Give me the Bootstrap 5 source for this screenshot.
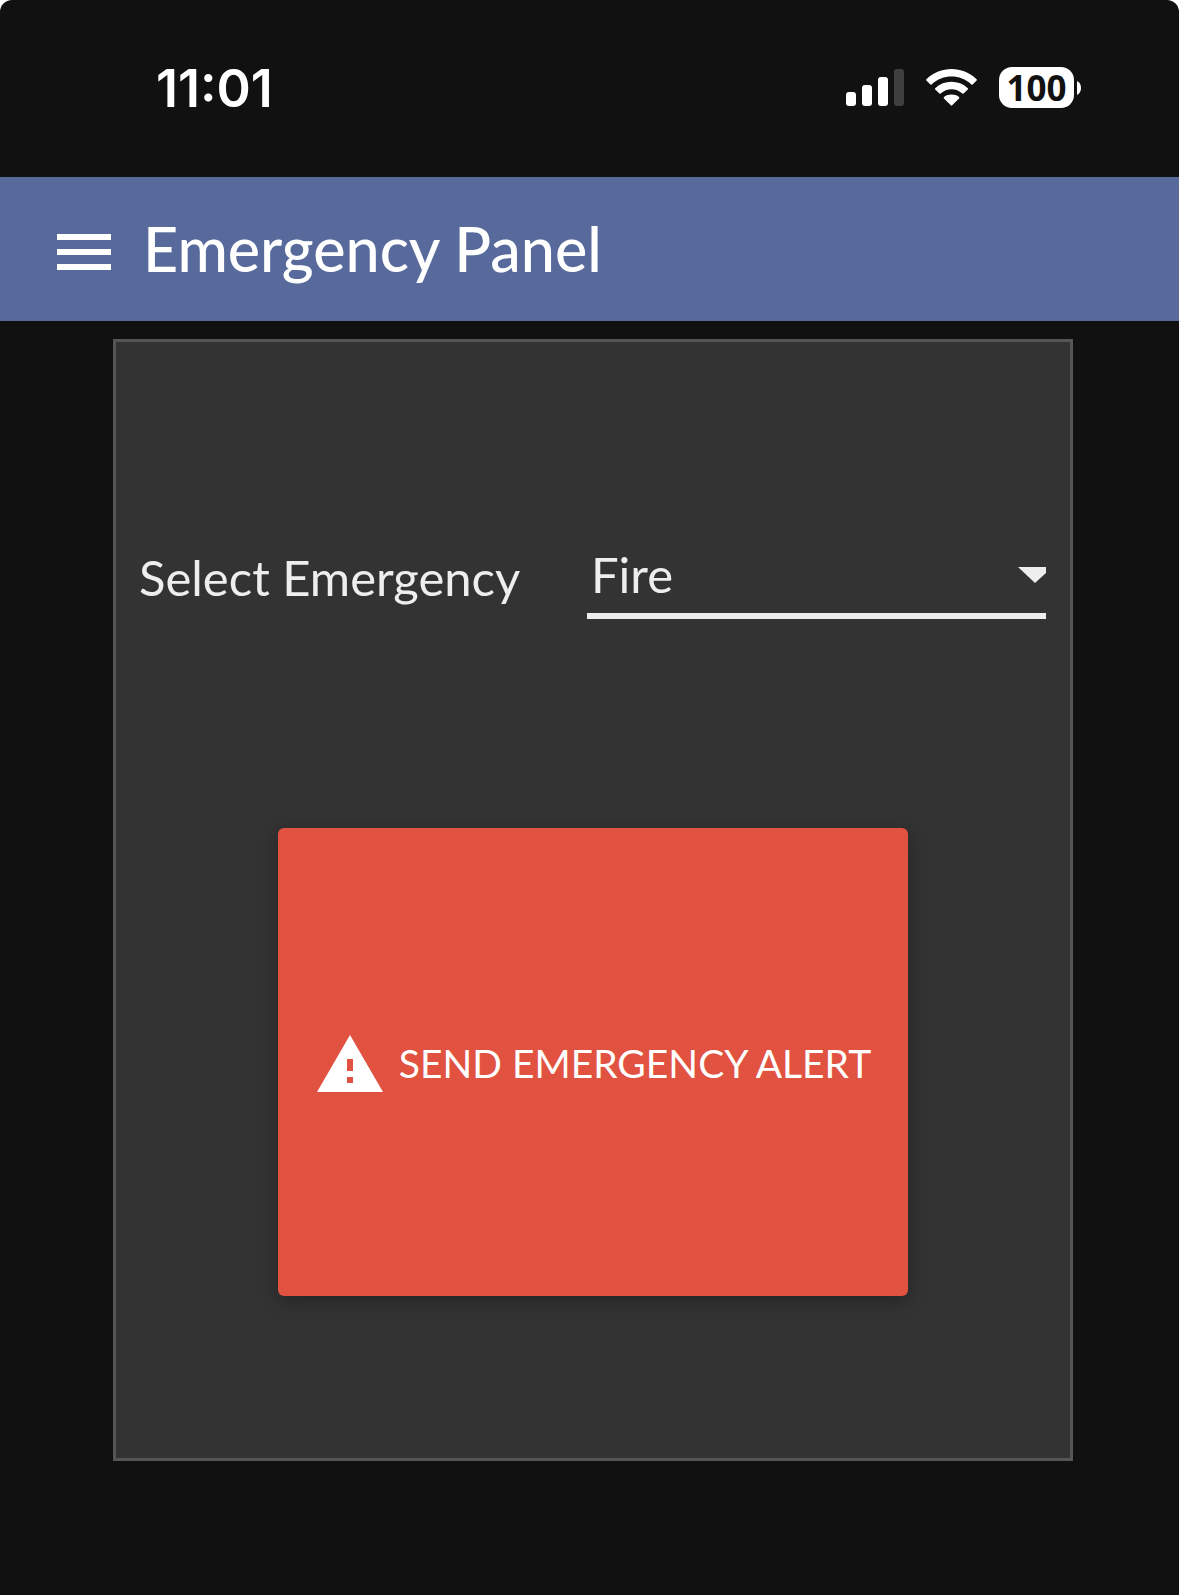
<!DOCTYPE html>
<html lang="en">
<head>
<meta charset="utf-8">
<meta name="viewport" content="width=device-width, initial-scale=1">
<title>Emergency Panel</title>
<link href="https://cdn.jsdelivr.net/npm/bootstrap@5.3.0/dist/css/bootstrap.min.css" rel="stylesheet">
<style>
html { background: #fff; }
body { background: transparent; font-family: "Trebuchet MS", Lato, sans-serif; color: #eee; }
.screen { background: #111; border-radius: 12px 12px 0 0; }
.status-bar { height: 177px; padding: 0 98px 2px 156px; font-family: Inter, sans-serif; color: #fff; }
.status-icons { gap: 22px; }
.clock { font-size: 52px; line-height: 60px; font-weight: 600; padding-top: 2px; }
.battery { gap: 3px; }
.battery-level { width: 75px; height: 41px; border-radius: 13px; background: #fff; color: #111; font-family: "Open Sans", sans-serif; font-size: 35px; line-height: 41px; font-weight: 700; }
.app-bar { height: 144px; padding: 0 57px; gap: 32px; background: #586a9b; color: #fff; }
.app-title { font-size: 61px; line-height: 72px; font-weight: 500; }
.panel-area { padding: 18px 106px 134px 113px; }
.alert-panel { background: #333; border: 3px solid #555; padding: 207px 24px 162px 12px; }
.field-label { font-size: 49px; line-height: 56px; padding-left: 11px; }
.line-select { font-size: 49px; line-height: 50px; height: 70px; padding: 0 36px 14px 0; color: #eee; border: 0; border-bottom: 6px solid #eee; border-radius: 0; text-indent: 4px;
  background: transparent url("data:image/svg+xml,%3Csvg xmlns='http://www.w3.org/2000/svg' width='28' height='16'%3E%3Cpath d='M0 0H28V6L17 16Z' fill='%23eee'/%3E%3C/svg%3E") no-repeat right 18px; background-size: 28px 16px; }
.line-select option { background: #333; }
.send-row { padding-left: 12px; }
.send-btn { width: 630px; max-width: 100%; min-height: 468px; margin-top: 209px; padding: 2px 0 0 2px; gap: 16px; background: #e15241; color: #fff; border: 0; border-radius: 6px; font-size: 39px; line-height: 60px; box-shadow: 0 5px 20px rgba(0,0,0,.3); }
.send-btn:hover { background: #cf4737; color: #fff; }
</style>
</head>
<body>
<div class="screen min-vh-100">
  <div class="status-bar d-flex align-items-center justify-content-between">
    <div class="clock">11:01</div>
    <div class="status-icons d-flex align-items-center">
      <svg width="58" height="37" viewBox="0 0 58 37" role="img" aria-label="Signal"><g fill="#fff"><rect y="23" width="10" height="14" rx="3"/><rect x="16" y="16" width="10" height="21" rx="3"/><rect x="32" y="8" width="10" height="29" rx="3"/><rect x="48" width="10" height="37" rx="3" fill="#404040"/></g></svg>
      <svg width="51" height="37" viewBox="0 0 51 37" role="img" aria-label="Wi-Fi"><g fill="#fff"><path d="M.4 10.300C14.500-3.400 36.500-3.400 50.600 10.300q.6.600 0 1.200L46.600 15.500q-.6.500-1.200 0C34 4.900 17 4.900 5.600 15.500q-.6.500-1.200 0L.4 11.500q-.6-.6 0-1.200Z"/><path d="M9.200 19.200C18.400 10.700 32.600 10.700 41.800 19.200q.6.600 0 1.200L37.600 24.600q-.6.500-1.200 0C30 18.900 21 18.900 14.600 24.600q-.6.500-1.200 0L9.200 20.400q-.6-.6 0-1.200Z"/><path d="M18 28C22.200 24.800 28.800 24.800 33 28q.7.600 0 1.400L26.200 36.300q-.7.700-1.400 0L18 29.400q-.7-.8 0-1.400Z"/></g></svg>
      <div class="battery d-flex align-items-center">
        <div class="battery-level text-center">100</div>
        <svg width="4" height="14" viewBox="0 0 4 14" aria-hidden="true"><path d="M0 0Q4 2 4 7T0 14Z" fill="#fff"/></svg>
      </div>
    </div>
  </div>
  <header class="app-bar d-flex align-items-center">
    <button type="button" class="btn p-0 border-0 d-flex" aria-label="Menu"><svg width="54" height="54" viewBox="0 0 54 54" fill="#fff"><path d="M0 12h54v6H0zM0 27h54v6H0zM0 42h54v6H0z"/></svg></button>
    <h1 class="app-title mb-0">Emergency Panel</h1>
  </header>
  <main class="panel-area">
    <form class="alert-panel">
      <div class="row g-0 align-items-start">
        <div class="col-6"><label class="field-label d-block" for="emergency">Select Emergency</label></div>
        <div class="col-6"><select id="emergency" class="form-select line-select"><option selected>Fire</option></select></div>
      </div>
      <div class="send-row d-flex justify-content-center">
        <button type="button" class="btn send-btn d-flex align-items-center justify-content-center">
          <svg width="66" height="57" viewBox="0 0 66 57" aria-hidden="true"><path fill="#fff" fill-rule="evenodd" d="M33 0 66 57H0ZM30 24v12h6V24ZM30 42v6h6v-6Z"/></svg>
          <span>SEND EMERGENCY ALERT</span>
        </button>
      </div>
    </form>
  </main>
</div>
<script src="https://cdn.jsdelivr.net/npm/bootstrap@5.3.0/dist/js/bootstrap.bundle.min.js"></script>
</body>
</html>
